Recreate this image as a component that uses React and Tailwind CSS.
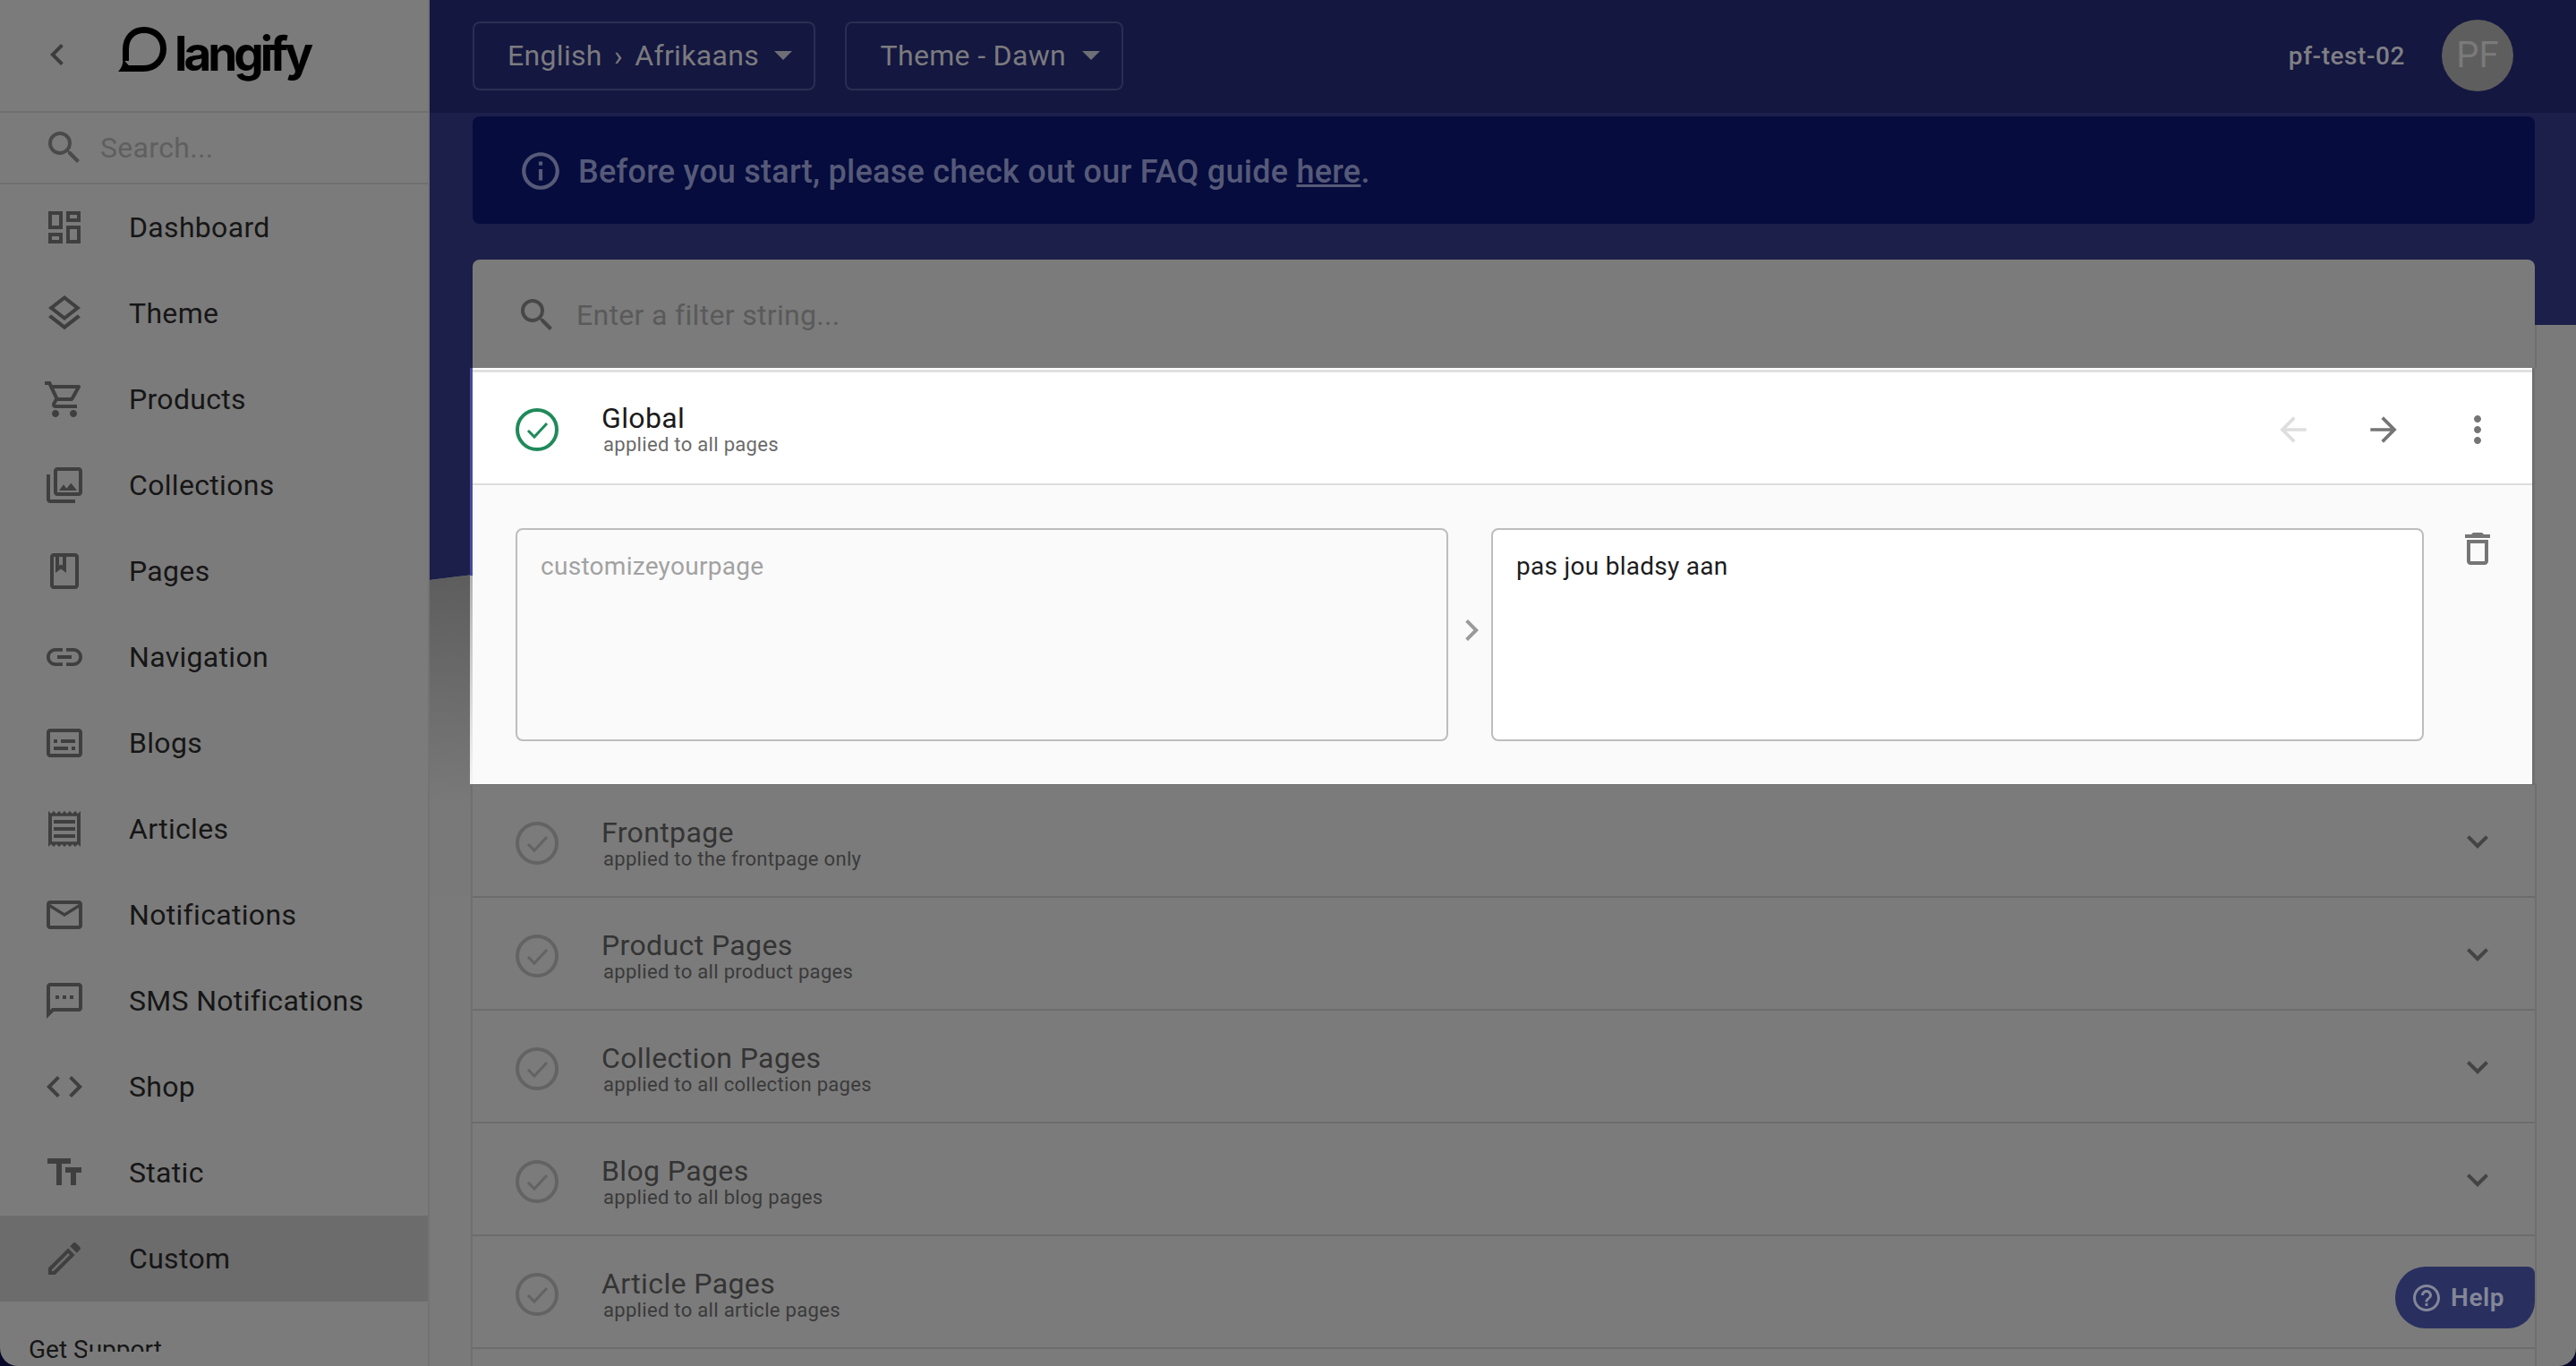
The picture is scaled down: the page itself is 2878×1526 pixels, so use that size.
import React from "react";
import {
  MdOutlineDashboard, MdOutlineLayers, MdOutlineShoppingCart, MdOutlinePhotoLibrary, MdOutlineBook, MdLink,
  MdOutlineSubtitles, MdOutlineReceipt, MdMailOutline, MdOutlineSms, MdCode, MdTextFields, MdOutlineEdit,
  MdSearch, MdChevronLeft, MdChevronRight, MdArrowBack, MdArrowForward, MdMoreVert, MdOutlineDelete,
  MdExpandMore, MdInfoOutline, MdHelpOutline,
} from "react-icons/md";

const nav = [
  ["Dashboard", MdOutlineDashboard],
  ["Theme", MdOutlineLayers],
  ["Products", MdOutlineShoppingCart],
  ["Collections", MdOutlinePhotoLibrary],
  ["Pages", MdOutlineBook],
  ["Navigation", MdLink],
  ["Blogs", MdOutlineSubtitles],
  ["Articles", MdOutlineReceipt],
  ["Notifications", MdMailOutline],
  ["SMS Notifications", MdOutlineSms],
  ["Shop", MdCode],
  ["Static", MdTextFields],
  ["Custom", MdOutlineEdit],
];

const rows = [
  ["Frontpage", "applied to the frontpage only"],
  ["Product Pages", "applied to all product pages"],
  ["Collection Pages", "applied to all collection pages"],
  ["Blog Pages", "applied to all blog pages"],
  ["Article Pages", "applied to all article pages"],
];

function Check({ className }) {
  return (
    <svg viewBox="0 0 48 48" className={className} fill="none" stroke="currentColor">
      <circle cx="24" cy="24" r="22" strokeWidth="4" />
      <path d="M14 25l7 7 14-15" strokeWidth="3" />
    </svg>
  );
}

function Logo() {
  return (
    <div className="flex items-start">
      <svg viewBox="0 0 54 50" className="w-[54px] h-[50px] shrink-0" fill="none">
        <path d="M9 46.5H28C42 46.5 50.5 36 50.5 24.5C50.5 12 41 3.5 29 3.5C16 3.5 8.5 13 8.5 25V38" stroke="#000" strokeWidth="7" />
        <path d="M0 50C4 46 5.5 41 5.5 36L12 43.2V50Z" fill="#000" />
      </svg>
      <span className="ml-[9px] text-[53px] leading-[60px] font-bold tracking-[-0.075em] text-black font-['Inter',sans-serif]">langify</span>
    </div>
  );
}

function Select({ children, w, extra }) {
  return (
    <div className={`${w} h-[77px] rounded-lg border-2 border-[#2b2e53] flex items-center justify-end pr-[24px] text-[32px] tracking-[0.01em] text-[#7b7b7f]`}>
      <span className={extra}>{children}</span>
      <span className="ml-[17px] w-0 h-0 border-x-[10px] border-x-transparent border-t-[10px] border-t-[#6e6e76]" />
    </div>
  );
}

export default function App() {
  return (
    <div className="relative flex w-[2878px] h-[1526px] overflow-hidden bg-[#07082a] font-['Roboto',sans-serif]">
      <aside className="relative w-[480px] h-full shrink-0 flex flex-col bg-[#7b7b7b] border-r-2 border-[#737373] rounded-bl-[20px] overflow-hidden">
        <div className="h-[126px] shrink-0 flex items-center border-b-2 border-[#6f6f6f] pl-[40px] pb-[2px]">
          <MdChevronLeft className="w-[48px] h-[48px] text-[#3d3d3d]" />
          <div className="ml-[44px] mt-[-3px]"><Logo /></div>
        </div>
        <div className="h-[80px] shrink-0 flex items-center border-b-2 border-[#6f6f6f] pl-[48px]">
          <MdSearch className="w-[48px] h-[48px] text-[#4a4a4a]" />
          <span className="ml-[16px] text-[32px] tracking-[0.01em] text-[#5f5f5f]">Search...</span>
        </div>
        <nav className="flex flex-col">
          {nav.map(([label, Icon]) => (
            <div key={label} className={`h-[96px] shrink-0 flex items-center pl-[48px] ${label === "Custom" ? "bg-[#6c6c6c]" : ""}`}>
              <Icon className="w-[48px] h-[48px] text-[#3f3f3f] shrink-0" />
              <span className="ml-[48px] text-[32px] tracking-[0.01em] text-[#161616]">{label}</span>
            </div>
          ))}
        </nav>
        <div className="mt-[35px] pl-[32px] text-[28px] leading-[38px] text-[#161616]">Get Support</div>
        <div className="absolute left-[97px] top-[1510px] w-[100px] h-[16px] bg-[#7b7b7b]" />
      </aside>

      <main className="relative flex-1 h-full flex flex-col overflow-hidden rounded-br-[20px] bg-[#1c1f4a]">
        <div className="absolute inset-0 bg-[#7a7a7a] [clip-path:polygon(0_648px,2352px_363px,2398px_363px,2398px_1526px,0_1526px)]">
          <div className="absolute left-0 top-0 w-[60px] h-[1000px] bg-[linear-gradient(to_bottom,#5d5d5d_640px,#797979_900px)]" />
        </div>
        <div className="absolute left-[2352px] top-[363px] w-[2px] h-[48px] bg-[#6f6f6f]" />

        <header className="relative h-[126px] shrink-0 bg-[#14173f] flex items-center pl-[48px] pr-[70px] pb-[2px]">
          <Select w="w-[383px]" extra="[word-spacing:5px]">English › Afrikaans</Select>
          <div className="w-[33px]" />
          <Select w="w-[311px]" extra="mr-[1px]">Theme - Dawn</Select>
          <div className="flex-1" />
          <span className="mt-[2px] text-[28px] font-medium tracking-[0.02em] text-[#7f7f85]">pf-test-02</span>
          <div className="ml-[41px] w-[80px] h-[80px] rounded-full bg-[#5e5e5e] flex items-center justify-center text-[40px] text-[#7a7a7a]">PF</div>
        </header>

        <div className="relative flex-1 min-h-0 pl-[48px] pr-[46px] pt-[4px] flex flex-col">
          <div className="h-[120px] shrink-0 rounded-lg bg-[#060c3d] flex items-center pl-[51px] pt-[4px] text-[36px] font-medium tracking-[0.25px] text-[#565a78]">
            <MdInfoOutline className="w-[50px] h-[50px] text-[#565a78] shrink-0 mt-[-2px]" />
            <span className="ml-[17px]">Before you start, please check out our FAQ guide <span className="underline">here</span>.</span>
          </div>

          <div className="mt-[40px] flex flex-col">
            <div className="h-[121px] rounded-t-lg bg-[#7b7b7b] flex items-center pl-[48px] pt-[2px]">
              <MdSearch className="w-[48px] h-[48px] text-[#474747]" />
              <span className="ml-[20px] text-[32px] tracking-[0.01em] text-[#5a5a5a]">Enter a filter string...</span>
            </div>

            <section className="relative bg-[#6f6f6f] pb-[1px]">
              <div className="absolute left-[-3px] top-0 w-[3px] h-[232px] bg-[#474a96]" />
              <div className="absolute left-[-3px] top-[232px] w-[3px] h-[233px] bg-[linear-gradient(to_bottom,#b0b0b0,#f4f4f4)]" />
              <div className="mr-[3px] bg-white pt-[2px]">
                <div className="border-t-[3px] border-[#e0e0e0] h-[129px] border-b-2 border-b-[#dcdcdc] flex items-center pl-[48px] pr-[37px] pt-[3px]">
                  <Check className="w-[48px] h-[48px] text-[#1f8a5a] shrink-0" />
                  <div className="ml-[48px] mt-[1px] flex flex-col">
                    <span className="text-[32px] leading-[34px] tracking-[0.012em] text-[#1a1a1a]">Global</span>
                    <span className="ml-[2px] text-[22px] leading-[26px] tracking-[0.014em] text-[#6a6a6a]">applied to all pages</span>
                  </div>
                  <div className="flex-1" />
                  <MdArrowBack className="w-[44px] h-[44px] text-[#dedede] shrink-0" />
                  <MdArrowForward className="ml-[57px] w-[44px] h-[44px] text-[#757575] shrink-0" />
                  <MdMoreVert className="ml-[59px] w-[48px] h-[48px] text-[#757575] shrink-0" />
                </div>
                <div className="h-[334px] bg-[#fafafa] flex pl-[48px] pt-[48px]">
                  <div className="w-[1042px] h-[238px] shrink-0 rounded-lg border-2 border-[#bdbdbd] pl-[26px] pt-[23px] text-[28px] leading-[36px] tracking-[0.01em] text-[#a2a2a2]">customizeyourpage</div>
                  <div className="w-[48px] h-[238px] shrink-0 flex items-center justify-center">
                    <MdChevronRight className="w-[48px] h-[48px] text-[#9a9a9a] mt-[-11px] ml-[3px] shrink-0" />
                  </div>
                  <div className="w-[1042px] h-[238px] shrink-0 rounded-lg border-2 border-[#bdbdbd] bg-white pl-[26px] pt-[23px] text-[28px] leading-[36px] tracking-[0.01em] text-[#1c1c1c]">pas jou bladsy aan</div>
                  <MdOutlineDelete className="ml-[36px] mt-[-1px] w-[48px] h-[48px] text-[#757575] shrink-0" />
                </div>
              </div>
            </section>

            <div className="bg-[#7b7b7b] shadow-[0_0_0_2px_#6f6f6f]">
              {rows.map(([title, sub]) => (
                <div key={title} className="h-[126px] border-b-2 border-[#6c6c6c] flex items-center pl-[48px] pr-[40px] pt-[6px]">
                  <Check className="w-[48px] h-[48px] text-[#636363] shrink-0" />
                  <div className="ml-[48px] mt-[1px] flex flex-col">
                    <span className="text-[32px] leading-[34px] tracking-[0.012em] text-[#343434]">{title}</span>
                    <span className="ml-[2px] text-[22px] leading-[26px] tracking-[0.014em] text-[#3a3a3a]">{sub}</span>
                  </div>
                  <div className="flex-1" />
                  <MdExpandMore className="w-[48px] h-[48px] text-[#444444] shrink-0 mt-[-4px]" />
                </div>
              ))}
              <div className="h-[40px]" />
            </div>
          </div>

          <div className="absolute right-[46px] bottom-[42px] w-[156px] h-[69px] flex items-center bg-[#293060] rounded-l-[34px] rounded-tr-[8px] rounded-br-[30px] pl-[17px]">
            <MdHelpOutline className="w-[36px] h-[36px] text-[#848797]" />
            <span className="ml-[9px] text-[28px] font-semibold tracking-[0.02em] text-[#848797]">Help</span>
          </div>
        </div>
      </main>
    </div>
  );
}
